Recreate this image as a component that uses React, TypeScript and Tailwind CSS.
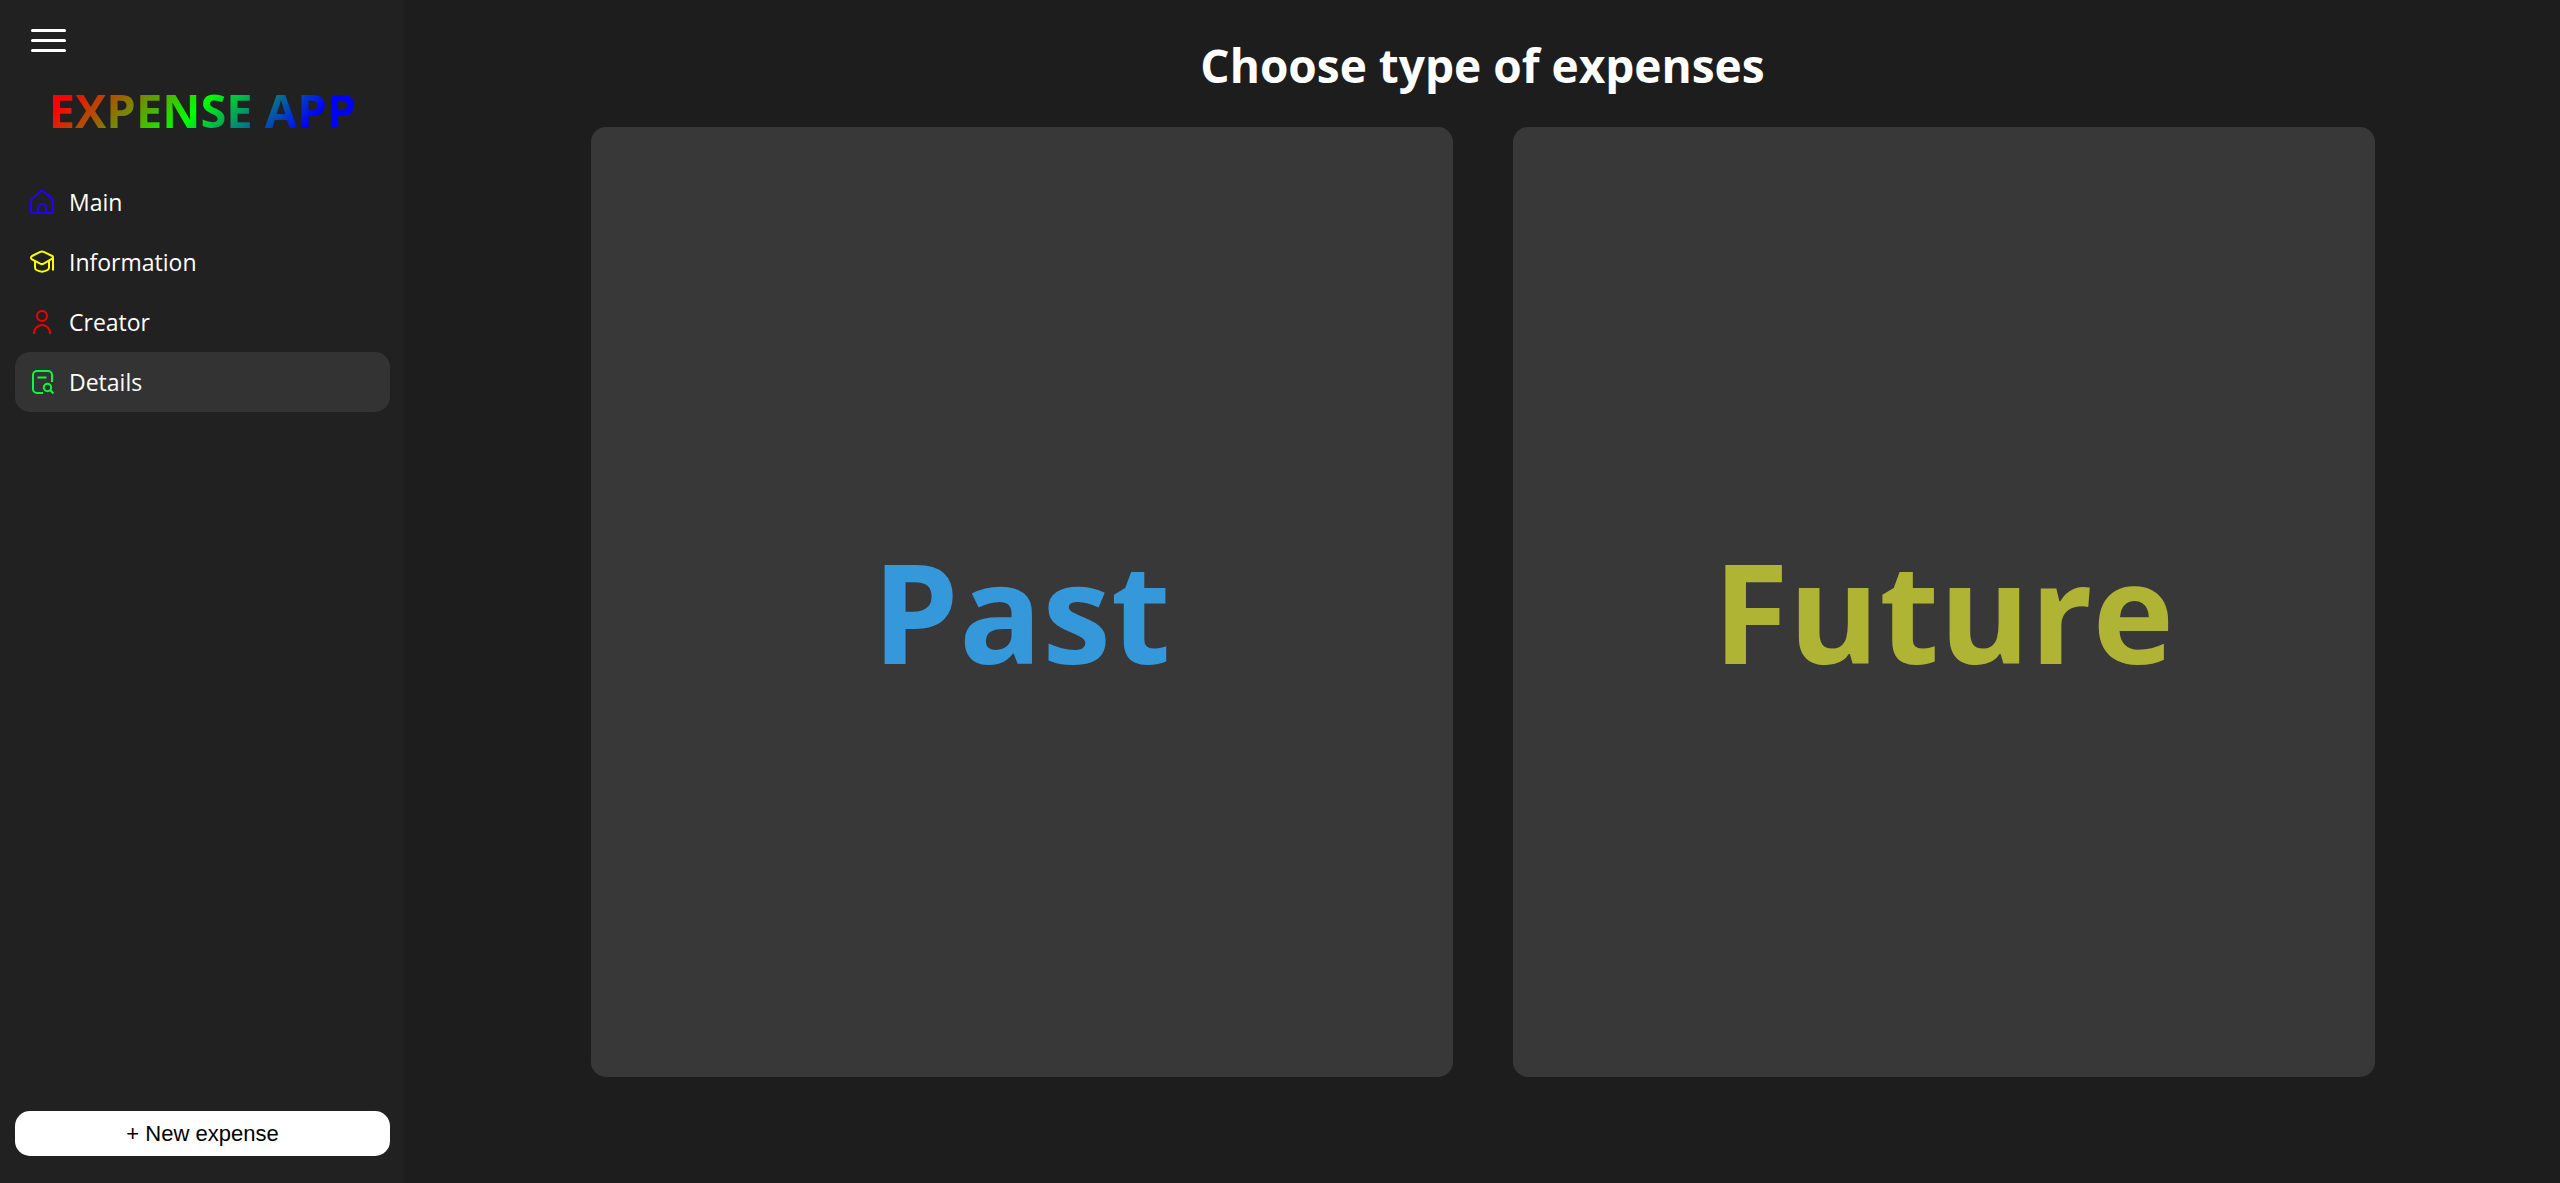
import type { ReactNode } from "react";

function Icon({ className, children }: { className: string; children: ReactNode }) {
  return (
    <svg
      viewBox="0 0 24 24"
      className={`size-6 shrink-0 fill-none stroke-current stroke-2 ${className}`}
      strokeLinecap="butt"
      strokeLinejoin="round"
      aria-hidden="true"
    >
      {children}
    </svg>
  );
}

const items = [
  {
    label: "Main",
    icon: (
      <Icon className="text-[#2400ff]">
        <path d="M1 11.500c0-1.100.5-2.200 1.400-2.900L9.600 2c1.400-1.200 3.400-1.200 4.800 0l7.200 6.600c.9.7 1.400 1.800 1.400 2.900V22c0 .6-.4 1-1 1H2c-.6 0-1-.4-1-1Z" />
        <path d="M8 23v-5a4 4 0 0 1 8 0v5" />
      </Icon>
    ),
  },
  {
    label: "Information",
    icon: (
      <Icon className="text-[#ffff00]">
        <path d="M23 20.500V8M10.300 1.800a4 4 0 0 1 3.400 0L22.200 6c1.100.6 1.100 2 0 2.600l-8.500 5.100a4 4 0 0 1-3.500 0L2 9.300c-1.300-.7-1.300-2.500 0-3.300Z" />
        <path d="M5 11v6.500c0 1 .5 2 1.400 2.500 3.400 2 7.800 2 11.200 0 .9-.5 1.400-1.500 1.400-2.500V11" />
      </Icon>
    ),
  },
  {
    label: "Creator",
    icon: (
      <Icon className="text-[#f00000]">
        <circle cx="12" cy="6" r="5" />
        <path d="M4 24v-1a8 8 0 0 1 16 0v1" />
      </Icon>
    ),
  },
  {
    label: "Details",
    active: true,
    icon: (
      <Icon className="text-[#00ff40]">
        <path d="M13 23H7a4 4 0 0 1-4-4V5a4 4 0 0 1 4-4h11a4 4 0 0 1 4 4v7M7.500 7.500h9" />
        <circle cx="17.500" cy="17.500" r="3.700" />
        <path d="m20 20 3.500 3.500" />
      </Icon>
    ),
  },
];

export default function App() {
  return (
    <div className="flex min-h-screen bg-[#1d1d1d] font-['Open_Sans','Noto_Sans',sans-serif] text-white">
      <aside className="flex w-[405px] shrink-0 flex-col bg-[#212121] px-[15px]">
        <button type="button" aria-label="Toggle menu" className="mt-[29px] ml-4 flex w-[35px] flex-col gap-[7px]">
          <span className="h-[3px] w-full rounded-full bg-white" />
          <span className="h-[3px] w-full rounded-full bg-white" />
          <span className="h-[3px] w-full rounded-full bg-white" />
        </button>
        <div className="mt-[26px] flex justify-center">
          <span className="bg-[linear-gradient(135deg,#f00_10%,#0f0_48%,#00f_82%)] bg-clip-text text-[47px] leading-[64px] font-bold text-transparent">
            EXPENSE APP
          </span>
        </div>
        <nav className="mt-[30px] flex flex-col">
          {items.map((item) => (
            <a
              key={item.label}
              href="#"
              aria-current={item.active ? "page" : undefined}
              className={`flex h-[60px] items-center gap-[15px] rounded-[15px] px-[15px] text-[23px] ${item.active ? "bg-[#333333]" : ""}`}
            >
              {item.icon}
              {item.label}
            </a>
          ))}
        </nav>
        <button
          type="button"
          className="mt-auto mb-[27px] h-[45px] rounded-[15px] bg-white font-['Liberation_Sans',sans-serif] text-[22px] text-black"
        >
          + New expense
        </button>
      </aside>
      <main className="flex grow flex-col items-center">
        <h1 className="mt-[33px] text-[46px] leading-[64px] font-bold">Choose type of expenses</h1>
        <div className="mt-[30px] mb-[106px] flex w-full grow justify-center gap-[60px]">
          <button type="button" className="w-2/5 rounded-[15px] bg-[#383838] pt-4 text-[138px] leading-none font-bold text-[#3498db]">
            Past
          </button>
          <button type="button" className="w-2/5 rounded-[15px] bg-[#383838] pt-4 text-[138px] leading-none font-bold text-[#b0b435]">
            Future
          </button>
        </div>
      </main>
    </div>
  );
}
